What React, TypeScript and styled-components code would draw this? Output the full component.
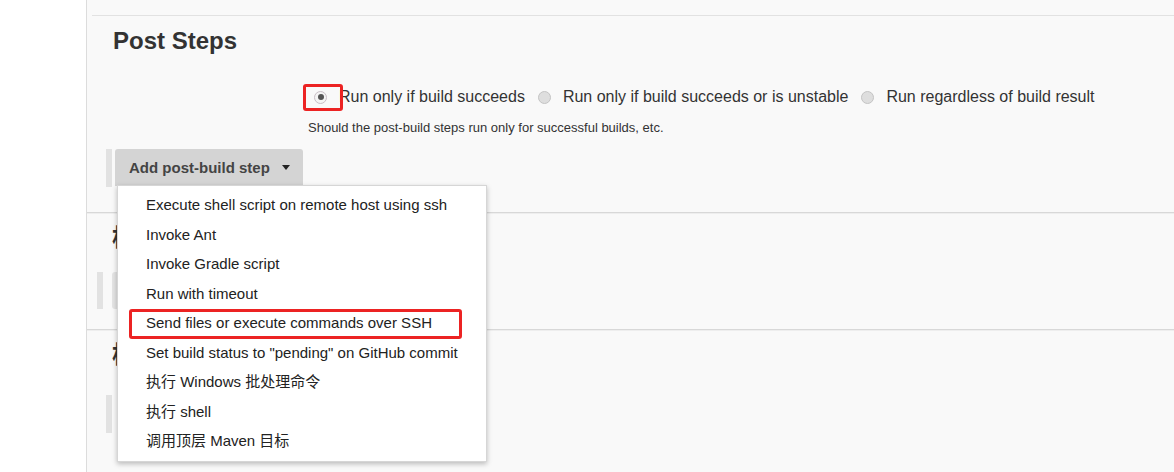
import React from "react";
import styled, {createGlobalStyle} from "styled-components";

const GlobalStyle = createGlobalStyle`
  html, body {
    margin: 0;
    padding: 0;
    background: #fff;
  }
  body {
    font-family: "Liberation Sans", Arial, "Noto Sans CJK SC", sans-serif;
    color: #333;
    overflow: hidden;
  }
`

const Page = styled.div`
  display: flex;
  width: 1174px;
  height: 472px;
  overflow: hidden;
`

const Sidebar = styled.div`
  width: 86px;
  flex: 0 0 86px;
  background: #fff;
  border-right: 1px solid #dcdcdc;
`

const Main = styled.div`
  flex: 1;
  background: #f9f9f9;
  display: flex;
  flex-direction: column;
`

const TopRule = styled.div`
  height: 15px;
  flex: 0 0 15px;
  margin-left: 5px;
  border-bottom: 1px solid #e2e2e2;
`

const Section = styled.section<{ $height: number }>`
  height: ${(p) => p.$height}px;
  flex: 0 0 auto;
  box-sizing: border-box;
  border-bottom: 1px solid #d8d8d8;
  box-shadow: 0 1px 0 #eeeeee;
  position: relative;
`

const Heading = styled.h2<{ $left: number }>`
  margin: 0;
  padding: 11px 0 0 ${(p) => p.$left}px;
  font-size: 24px;
  font-weight: bold;
  line-height: 28px;
  color: #333;
`

const RadioRow = styled.div`
  display: flex;
  align-items: center;
  margin: 32px 0 0 227px;
  font-size: 16px;
  height: 20px;
`

const RadioOption = styled.label`
  display: flex;
  align-items: center;
  position: relative;
  margin-right: 13px;
  color: #333;
`

const RadioDot = styled.span<{ $checked?: boolean }>`
  width: 13px;
  height: 13px;
  box-sizing: border-box;
  border-radius: 50%;
  margin-right: 12px;
  border: 1px solid ${(p) => (p.$checked ? "#c9bfc6" : "#c4c4c4")};
  background: ${(p) => (p.$checked ? "#f4f4f4" : "#dedede")};
  display: flex;
  align-items: center;
  justify-content: center;

  &::after {
    content: '';
    display: ${(p) => (p.$checked ? "block" : "none")};
    width: 6px;
    height: 6px;
    border-radius: 50%;
    background: #555;
  }
`

const Highlight = styled.span<{ $w: number; $h: number; $x: number; $y: number }>`
  position: absolute;
  left: ${(p) => p.$x}px;
  top: ${(p) => p.$y}px;
  width: ${(p) => p.$w}px;
  height: ${(p) => p.$h}px;
  box-sizing: border-box;
  border: 3px solid #ec2323;
  border-radius: 3px;
  pointer-events: none;
`

const Help = styled.div`
  margin: 13px 0 0 221px;
  font-size: 13px;
  line-height: 15px;
  color: #333;
`

const ButtonRow = styled.div<{ $top: number; $left: number }>`
  display: flex;
  margin: ${(p) => p.$top}px 0 0 ${(p) => p.$left}px;
  position: relative;
`

const Bar = styled.span<{ $h: number }>`
  width: 6px;
  height: ${(p) => p.$h}px;
  background: #e2e2e2;
  margin-right: 3px;
`

const DropButton = styled.button`
  height: 37px;
  padding: 0 13px 0 14px;
  border: none;
  border-radius: 3px 3px 0 0;
  background: #d4d4d4;
  color: #444;
  font-family: "Liberation Sans", Arial, sans-serif;
  font-size: 15px;
  font-weight: bold;
  display: flex;
  align-items: center;
  gap: 10px;
  cursor: pointer;
`

const Caret = styled.span`
  width: 0;
  height: 0;
  border-left: 4.5px solid transparent;
  border-right: 4.5px solid transparent;
  border-top: 5px solid #222;
  margin-left: 2px;
`

const GhostButton = styled.span`
  width: 40px;
  height: 37px;
  margin-left: 6px;
  border-radius: 3px;
  background: #e4e4e4;
`

const Menu = styled.ul`
  position: absolute;
  left: 11px;
  top: 36px;
  z-index: 10;
  width: 370px;
  margin: 0;
  padding: 4px 0 5px;
  list-style: none;
  background: #fff;
  border: 1px solid #d6d6d6;
  box-shadow: 0 2px 5px rgba(0, 0, 0, 0.25);
  box-sizing: border-box;
`

const MenuItem = styled.li`
  position: relative;
  height: 29.5px;
  line-height: 29.5px;
  padding-left: 28px;
  font-size: 15px;
  color: #222;
  white-space: nowrap;
`

const steps = [
    "Execute shell script on remote host using ssh",
    "Invoke Ant",
    "Invoke Gradle script",
    "Run with timeout",
    "Send files or execute commands over SSH",
    "Set build status to \"pending\" on GitHub commit",
    "执行 Windows 批处理命令",
    "执行 shell",
    "调用顶层 Maven 目标",
]

const options = [
    "Run only if build succeeds",
    "Run only if build succeeds or is unstable",
    "Run regardless of build result",
]

export default function App() {
    return (
        <>
            <GlobalStyle/>
            <Page>
                <Sidebar/>
                <Main>
                    <TopRule/>
                    <Section $height={197}>
                        <Heading $left={26}>Post Steps</Heading>
                        <RadioRow>
                            {options.map((label, i) => (
                                <RadioOption key={label}>
                                    <RadioDot $checked={i === 0}/>
                                    {label}
                                    {i === 0 && <Highlight $x={-11} $y={-4} $w={40} $h={27}/>}
                                </RadioOption>
                            ))}
                        </RadioRow>
                        <Help>Should the post-build steps run only for successful builds, etc.</Help>
                        <ButtonRow $top={14} $left={19}>
                            <Bar $h={38}/>
                            <DropButton>Add post-build step <Caret/></DropButton>
                            <Menu>
                                {steps.map((s, i) => (
                                    <MenuItem key={s}>
                                        {s}
                                        {i === 4 && <Highlight $x={11} $y={1} $w={333} $h={30}/>}
                                    </MenuItem>
                                ))}
                            </Menu>
                        </ButtonRow>
                    </Section>
                    <Section $height={117}>
                        <Heading $left={25}>构建设置</Heading>
                        <ButtonRow $top={20} $left={10}>
                            <Bar $h={37}/>
                            <GhostButton/>
                        </ButtonRow>
                    </Section>
                    <Section $height={200}>
                        <Heading $left={25}>构建后操作</Heading>
                        <ButtonRow $top={26} $left={19}>
                            <Bar $h={38}/>
                            <GhostButton/>
                        </ButtonRow>
                    </Section>
                </Main>
            </Page>
        </>
    )
}
